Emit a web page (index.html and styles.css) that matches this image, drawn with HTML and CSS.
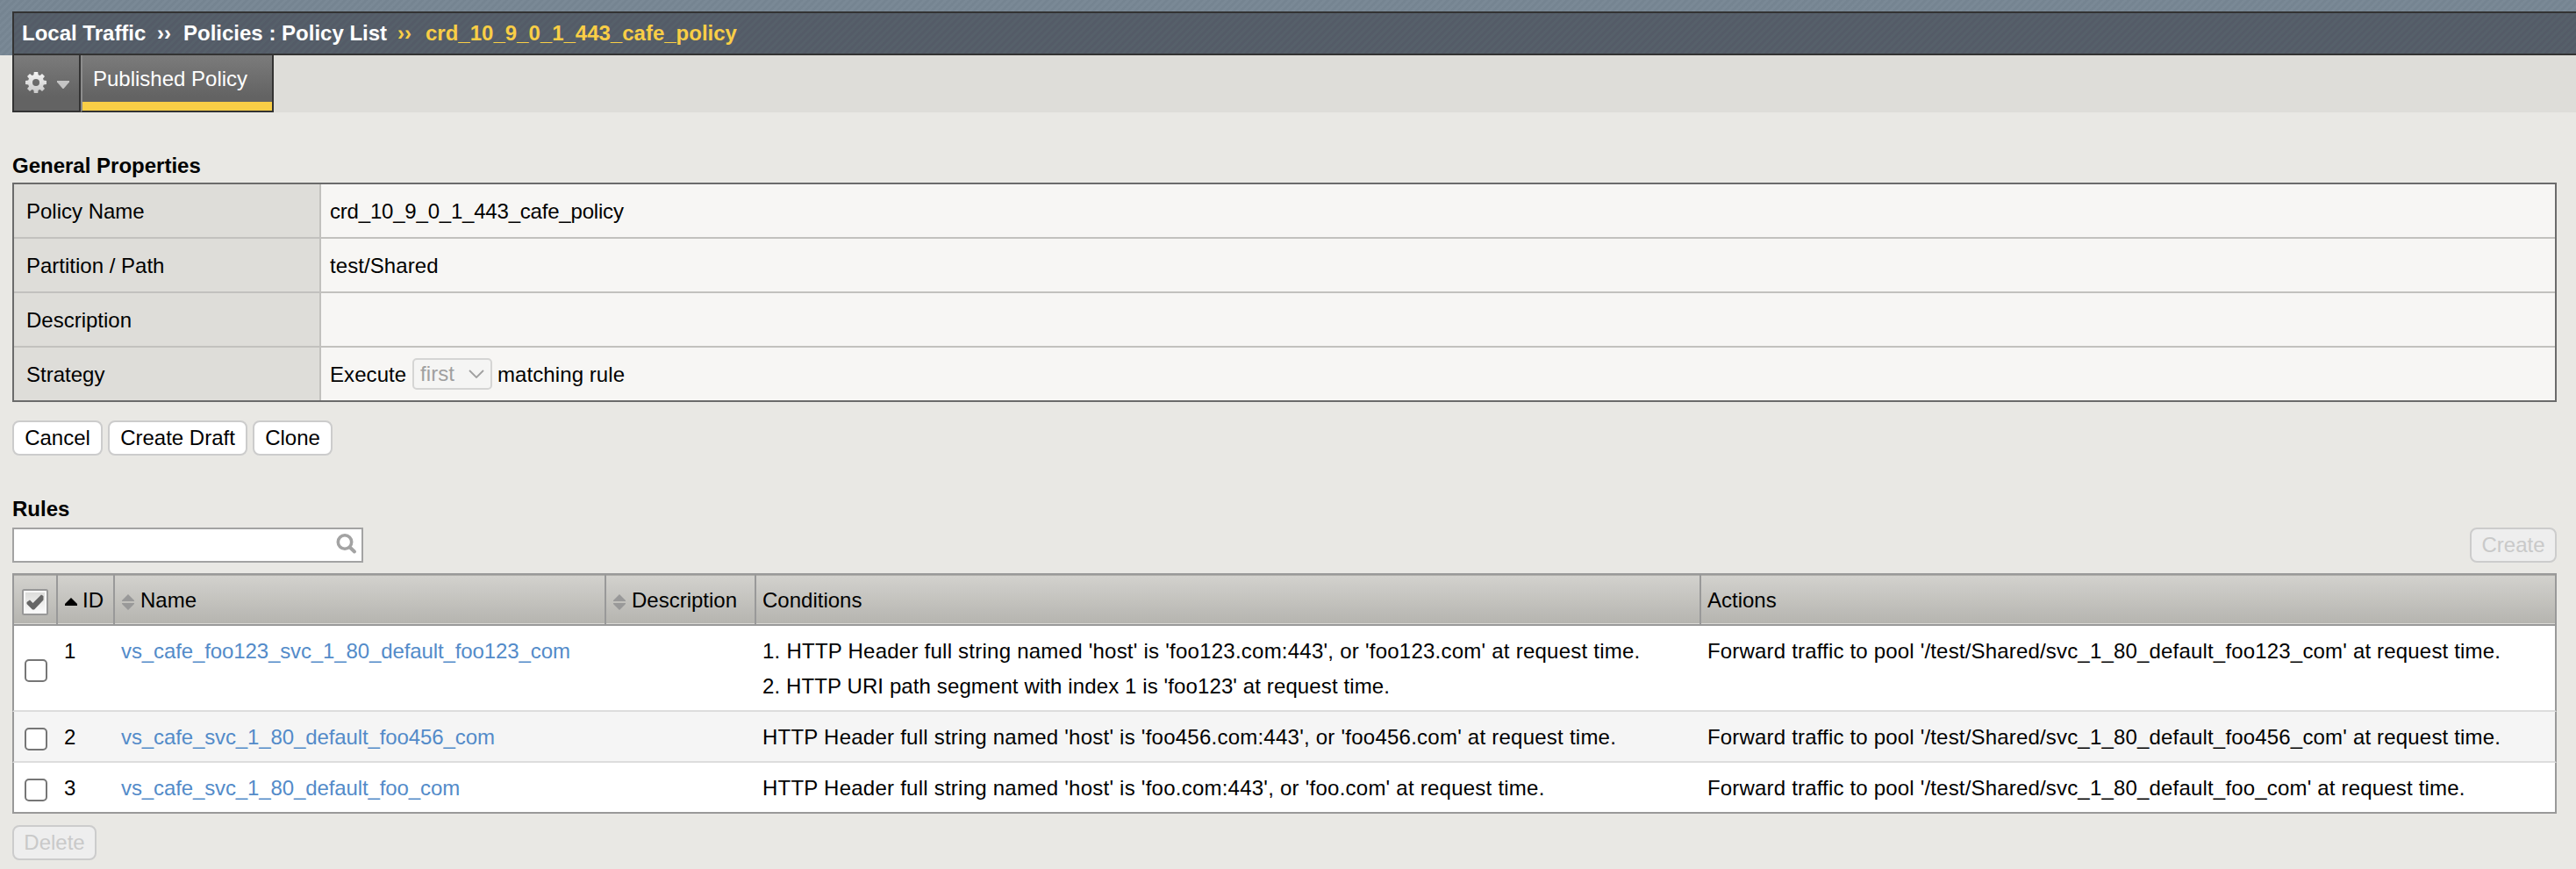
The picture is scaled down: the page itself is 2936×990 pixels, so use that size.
FILE: index.html
```html
<!DOCTYPE html>
<html lang="en">
<head>
<meta charset="utf-8">
<title>Policy List</title>
<link rel="stylesheet" href="styles.css">
</head>
<body>
<svg class="defs" width="0" height="0">
  <defs>
    <linearGradient id="gearFill" x1="0" y1="0" x2="0" y2="1"><stop offset="0" stop-color="#f4f4f4"/><stop offset="1" stop-color="#c9c9c9"/></linearGradient>
    <linearGradient id="boxFill" x1="0" y1="0" x2="0" y2="1"><stop offset="0" stop-color="#dcdcda"/><stop offset="1" stop-color="#fafafa"/></linearGradient>
    <symbol id="sort" viewBox="0 0 14 18"><path d="M7 0L14 7V8H0V7Z M0 10H14V11L7 18L0 11Z" fill="#999"/></symbol>
  </defs>
</svg>
<header class="banner">
  <nav class="crumbs"><span class="c1">Local Traffic</span><span class="sep s1">››</span><span class="c2">Policies : Policy List</span><span class="sep s2">››</span><span class="current">crd_10_9_0_1_443_cafe_policy</span></nav>
</header>
<div class="tabs">
  <div class="gear">
    <svg class="gear-icon" width="28" height="28" viewBox="-14 -14 28 28">
      <g fill="url(#gearFill)">
        <path fill-rule="evenodd" d="M-2.2 -12H2.2L2.6 -8.8L4.6 -8L7 -10L10 -7L8 -4.6L8.8 -2.4L12 -2V2L8.8 2.4L8 4.6L10 7L7 10L4.6 8L2.6 8.8L2.2 12H-2.2L-2.6 8.8L-4.6 8L-7 10L-10 7L-8 4.6L-8.8 2.4L-12 2V-2L-8.8 -2.4L-8 -4.6L-10 -7L-7 -10L-4.6 -8L-2.6 -8.8Z M0 -4A4 4 0 1 0 0 4A4 4 0 1 0 0 -4Z"/>
      </g>
    </svg>
    <svg class="caret" width="14" height="9" viewBox="0 0 14 9"><path d="M0 0H14V1.5L7.5 9H6.5L0 1.5Z" fill="#c4c4c4"/></svg>
  </div>
  <div class="tab">Published Policy</div>
</div>
<main>
  <h2 class="general-title">General Properties</h2>
  <section class="props">
    <div class="label">Policy Name</div><div class="value name">crd_10_9_0_1_443_cafe_policy</div>
    <div class="label">Partition / Path</div><div class="value">test/Shared</div>
    <div class="label">Description</div><div class="value"></div>
    <div class="label">Strategy</div>
    <div class="value">Execute <span class="select">first<svg width="18" height="10" viewBox="0 0 18 10"><path d="M1 1L9 9L17 1" fill="none" stroke="#a0a0a0" stroke-width="1.8"/></svg></span>matching rule</div>
  </section>
  <div class="buttons"><button class="b-cancel">Cancel</button><button class="b-draft">Create Draft</button><button class="b-clone">Clone</button></div>
  <h2 class="rules-title">Rules</h2>
  <div class="toolbar">
    <div class="search"><svg width="24" height="24" viewBox="0 0 24 24" fill="none" stroke="#a3a3a3"><circle cx="10" cy="9.5" r="7.7" stroke-width="3.6"/><path d="M16 15.8L21 20.5" stroke-width="4" stroke-linecap="round"/></svg></div>
    <button class="b-create" disabled>Create</button>
  </div>
  <section class="rules">
    <div class="row head">
      <div class="check"><svg width="30" height="30" viewBox="0 0 30 30"><rect x="1" y="1" width="28" height="28" rx="1.5" fill="#f7f7f7" stroke="#989898" stroke-width="2"/><rect x="4" y="4" width="22" height="22" fill="url(#boxFill)"/><path d="M5.5 15L9 12.5L12.5 16L22 6.500L24.500 8V12.500L14 23.500H12L5.500 17Z" fill="#666"/></svg></div>
      <div><svg class="up" width="14" height="9" viewBox="0 0 14 9"><path d="M7 0L14 7V9H0V7Z" fill="#000"/></svg>ID</div>
      <div><svg class="sort" width="14" height="18"><use href="#sort"/></svg>Name</div>
      <div><svg class="sort" width="14" height="18"><use href="#sort"/></svg>Description</div>
      <div>Conditions</div>
      <div>Actions</div>
    </div>
    <div class="row tall">
      <div class="check"><span class="box"></span></div><div>1</div><div><a>vs_cafe_foo123_svc_1_80_default_foo123_com</a></div><div></div>
      <div class="cond">1. HTTP Header full string named 'host' is 'foo123.com:443', or 'foo123.com' at request time.<br><span class="uri">2. HTTP URI path segment with index 1 is 'foo123' at request time.</span></div>
      <div class="act">Forward traffic to pool '/test/Shared/svc_1_80_default_foo123_com' at request time.</div>
    </div>
    <div class="row alt">
      <div class="check"><span class="box"></span></div><div>2</div><div><a>vs_cafe_svc_1_80_default_foo456_com</a></div><div></div>
      <div class="cond">HTTP Header full string named 'host' is 'foo456.com:443', or 'foo456.com' at request time.</div>
      <div class="act">Forward traffic to pool '/test/Shared/svc_1_80_default_foo456_com' at request time.</div>
    </div>
    <div class="row">
      <div class="check"><span class="box"></span></div><div>3</div><div><a>vs_cafe_svc_1_80_default_foo_com</a></div><div></div>
      <div class="cond">HTTP Header full string named 'host' is 'foo.com:443', or 'foo.com' at request time.</div>
      <div class="act">Forward traffic to pool '/test/Shared/svc_1_80_default_foo_com' at request time.</div>
    </div>
  </section>
  <button class="b-delete" disabled>Delete</button>
</main>
</body>
</html>
```
FILE: styles.css
```css
* { box-sizing: border-box; }
body {
  margin: 0;
  height: 990px;
  overflow: hidden;
  background: #e9e8e4;
  color: #000;
  font: 24px/40px "Liberation Sans", Arial, Helvetica, sans-serif;
}
svg { display: block; flex: none; }
.defs { position: absolute; }
.banner {
  height: 63px;
  padding: 13px 0 0 14px;
  background: repeating-linear-gradient(135deg, #758491 0, #758491 2px, #7a8996 3px, #7a8996 5px, #758491 5.66px);
}
.crumbs {
  display: flex;
  height: 50px;
  padding: 1px 0 0 9px;
  line-height: 44px;
  border: 2px solid #333;
  border-right: 0;
  background: repeating-linear-gradient(135deg, #545b67 0, #545b67 2px, #56606a 3px, #56606a 5px, #545b67 5.66px);
  color: #fff;
  font-weight: bold;
  white-space: nowrap;
}
.c1 { width: 154px; }
.sep { width: 32px; }
.sep.s1 { width: 30px; }
.c2 { width: 244px; }
.sep.s2, .current { color: #f9ce46; }
.tabs {
  display: flex;
  height: 65px;
  margin-left: 14px;
  background: #deddd9;
}
.gear {
  display: flex;
  width: 78px;
  padding: 17px 0 0 11px;
  border: 2px solid #333;
  border-top: 0;
  background: linear-gradient(#7b7b7b, #636363 75%);
}
.caret { margin: 12px 0 0 10px; }
.tab {
  width: 220px;
  padding: 7px 0 0 12px;
  border: 2px solid #333;
  border-top: 0;
  border-left-color: #8c8c8c;
  background: linear-gradient(#f9ce46, #f9ce46) bottom / 100% 10px no-repeat padding-box, linear-gradient(#7b7b7b, #636363 75%);
  color: #fff;
}
main { padding: 0 22px 0 14px; }
h2 { margin: 0; font-size: 24px; line-height: 40px; }
.general-title { padding-top: 41px; height: 80px; }
.props {
  display: grid;
  grid-template-columns: 350px 1fr;
  grid-auto-rows: 62px;
  height: 250px;
  border: 2px solid #6b6b6b;
  overflow: hidden;
}
.label, .value {
  display: flex;
  align-items: center;
  padding-top: 1px;
  border-bottom: 2px solid #c2c1be;
  white-space: pre;
}
.label { padding-left: 14px; background: #deddd9; border-right: 2px solid #c2c1be; }
.value { padding-left: 10px; background: #f7f6f4; letter-spacing: 0.08px; }
.value.name { letter-spacing: -0.2px; }
.select {
  display: flex;
  align-items: center;
  justify-content: space-between;
  width: 91px;
  height: 36px;
  margin: -2px 6px 0 0;
  padding: 1px 7px 0 7px;
  border: 2px solid #d5d5d4;
  border-radius: 5px;
  background: #f5f5f4;
  color: #a0a0a0;
}
button {
  display: block;
  height: 40px;
  padding: 0;
  border: 2px solid #ccc;
  border-radius: 8px;
  background: #fff;
  color: #000;
  font: 24px/36px "Liberation Sans", Arial, sans-serif;
}
button:disabled { color: #c9c9c9; background: #eee; }
.buttons { display: flex; gap: 6px; margin-top: 21px; }
.b-cancel { width: 103px; }
.b-draft { width: 159px; }
.b-clone { width: 91px; }
.rules-title { padding-top: 41px; height: 82px; }
.toolbar { display: flex; justify-content: space-between; height: 52px; }
.search {
  display: flex;
  justify-content: flex-end;
  width: 400px;
  height: 40px;
  padding: 5px 5px 0 0;
  border: 2px solid #a3a3a3;
  background: #fff;
}
.b-create { width: 99px; }
.b-delete { width: 96px; margin-top: 13px; }
.rules {
  border-top: 2px solid #999;
  border-bottom: 2px solid #999;
}
.row {
  display: grid;
  grid-template-columns: 50px 65px 560px 171px 1077px 1fr;
  height: 58px;
  padding: 9px 0 0;
  border: 2px solid #999;
  border-top: 0;
  border-bottom-color: #ddd;
  background: #fff;
  white-space: nowrap;
}
.row > div { padding-left: 7px; }
.row > .check { padding-left: 12px; }
.row:last-child { height: 56px; border-bottom: 0; }
.row.alt { background: #f5f5f5; }
.row.tall { height: 98px; }
.box {
  display: block;
  width: 26px;
  height: 26px;
  margin-top: 9px;
  border: 2px solid #767676;
  border-radius: 5px;
  background: #fff;
}
.tall .box { margin-top: 29px; }
.cond { letter-spacing: 0.24px; }
.uri { letter-spacing: 0.11px; }
.act { letter-spacing: 0.18px; }
.row.head {
  padding: 0;
  border-bottom-color: #999;
  background: linear-gradient(#aeada9 0 1px, transparent 1px calc(100% - 1px), #dbdad6 0), linear-gradient(#d3d2ce, #b5b4af);
  line-height: 58px;
}
.head > div { display: flex; border-right: 2px solid #999; }
.head > div:last-child { border-right: 0; }
.head > .check { padding: 16px 0 0 9px; }
.up { margin: 26px 6px 0 1px; }
.sort { margin: 22px 7px 0 1px; }
a { color: #538bc9; letter-spacing: -0.11px; }
```
